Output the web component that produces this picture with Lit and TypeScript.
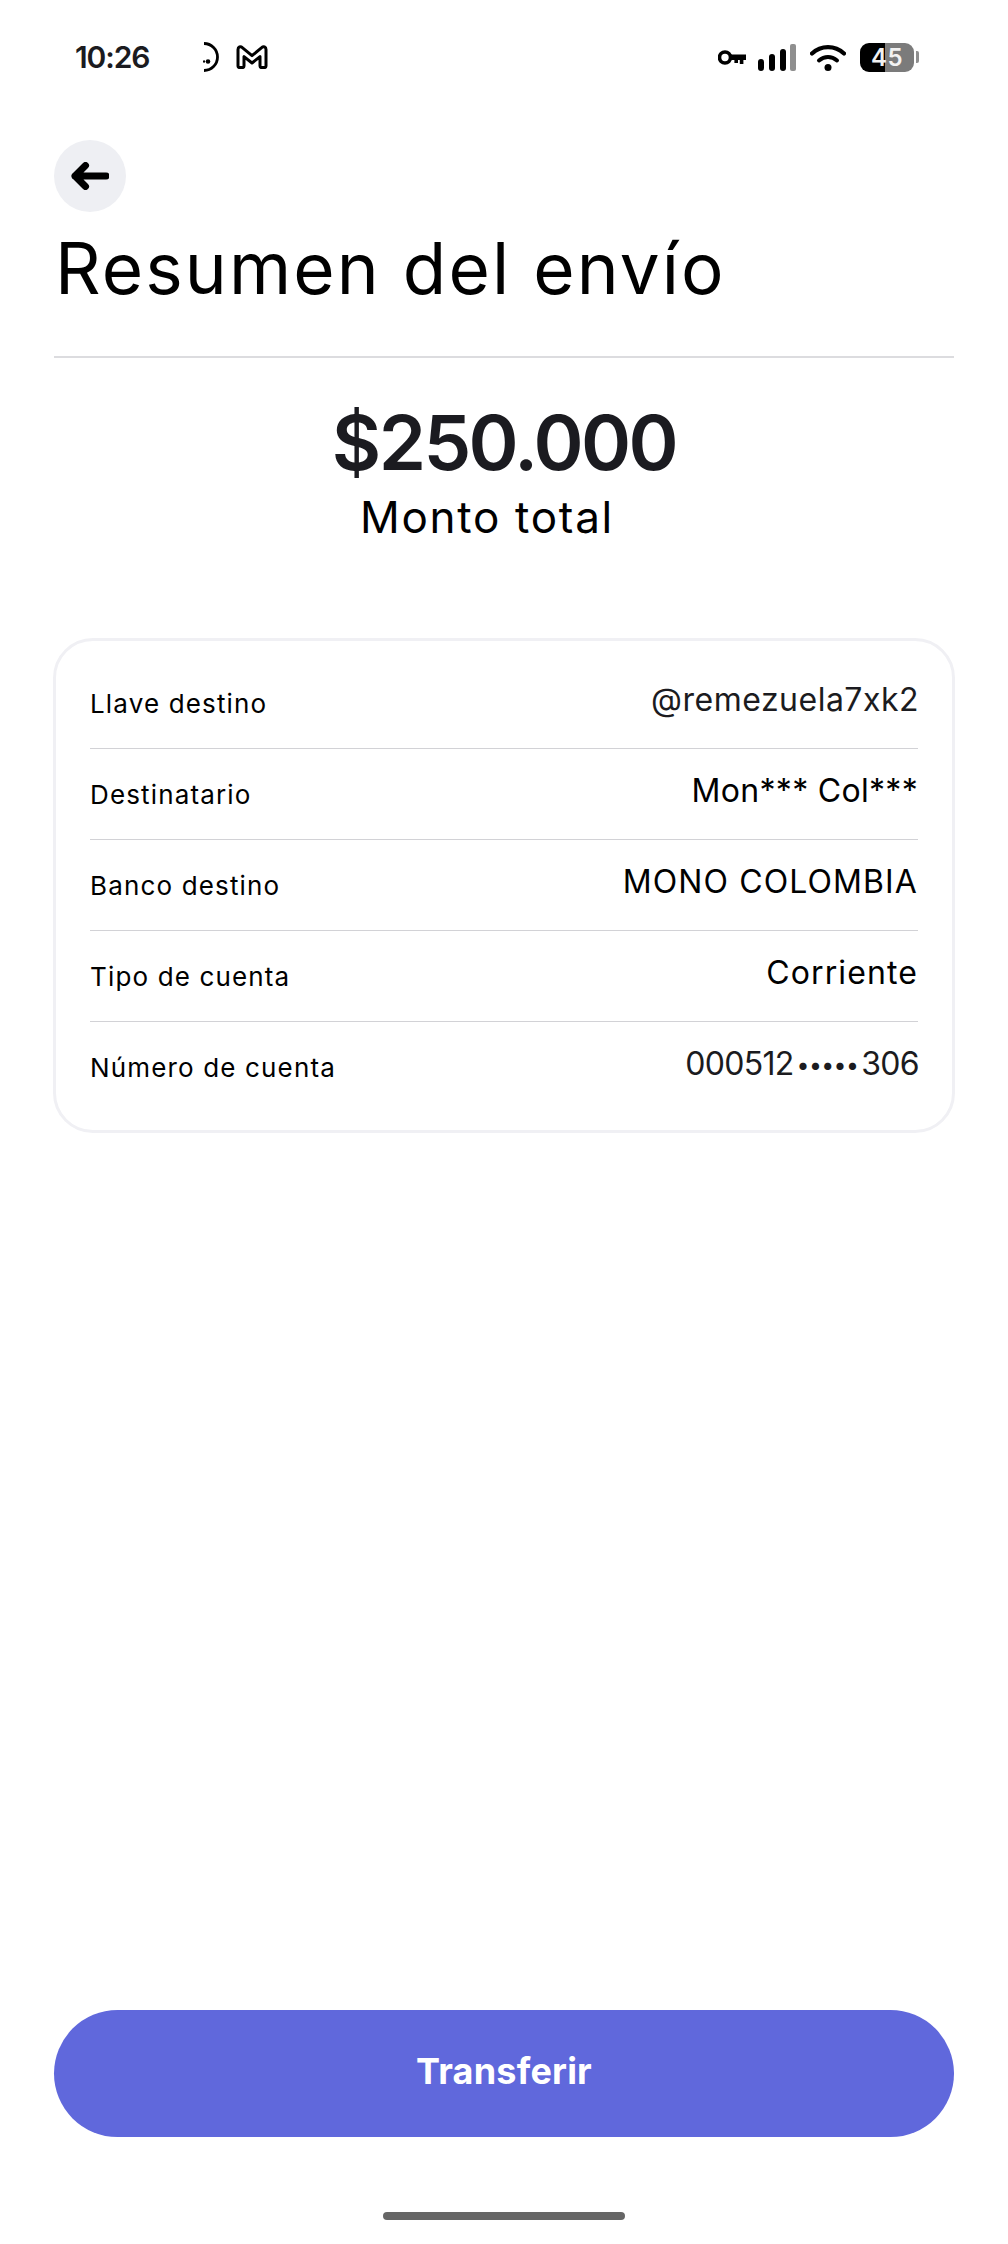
import { LitElement, html, css, svg } from 'lit';
import { customElement } from 'lit/decorators.js';

const rows = [
  { label: 'Llave destino', value: html`@remezuela7xk2`, cls: 'dark loose' },
  { label: 'Destinatario', value: html`Mon*** Col***`, cls: 'even' },
  { label: 'Banco destino', value: html`MONO COLOMBIA`, cls: 'wide' },
  { label: 'Tipo de cuenta', value: html`Corriente`, cls: 'wide' },
  {
    label: 'Número de cuenta',
    value: html`000512<span class="mask">•••••</span>306`,
    cls: 'dark tight',
  },
];

const moon = svg`<svg width="17" height="30" viewBox="0 0 17 30" fill="none">
  <path d="M1 1.500a13.500 13.500 0 0 1 0 27" stroke="#000" stroke-width="2.800"/>
  <circle cx="5" cy="19.500" r="2.300" fill="#000"/>
  <circle cx="1" cy="19.500" r="1.200" fill="#000"/>
</svg>`;

const gmail = svg`<svg class="gmail" width="32" height="24" viewBox="0 0 32 24" fill="none">
  <path d="M2 4.500C2 1.800 4.600 1 6 2.400L16 10.600 26 2.400C27.400 1 30 1.800 30 4.500V21a1.600 1.600 0 0 1-1.600 1.600H25.600A1.600 1.600 0 0 1 24 21V11.600L16 18 8 11.600V21a1.600 1.600 0 0 1-1.600 1.600H3.600A1.600 1.600 0 0 1 2 21Z" stroke="#000" stroke-width="3" stroke-linejoin="round"/>
</svg>`;

const key = svg`<svg class="key" width="28" height="15" viewBox="0 0 28 15" fill="none">
  <circle cx="7" cy="7.500" r="5.500" stroke="#000" stroke-width="3.600"/>
  <path d="M12 4.500h16v5.400h-2.600V14h-3.600V9.900h-1.800v3.100h-3.600V9.900H12Z" fill="#000"/>
</svg>`;

const signal = svg`<svg class="signal" width="38" height="27" viewBox="0 0 38 27">
  <rect x="0" y="15" width="6" height="12" rx="3" fill="#000"/>
  <rect x="11" y="10" width="6" height="17" rx="3" fill="#000"/>
  <rect x="22" y="5" width="6" height="22" rx="3" fill="#000"/>
  <rect x="32" y="0" width="6" height="27" rx="2" fill="#8f8f8f"/>
</svg>`;

const wifi = svg`<svg class="wifi" width="36" height="27" viewBox="0 0 36 27" fill="none">
  <path d="M2 9.500C11 1 25 1 34 9.500" stroke="#000" stroke-width="4.200" stroke-linecap="round"/>
  <path d="M9 16.500c5.400-4.600 12.600-4.600 18 0" stroke="#000" stroke-width="4" stroke-linecap="round"/>
  <circle cx="18" cy="23.500" r="3.500" fill="#000"/>
</svg>`;

const arrow = svg`<svg width="38" height="28" viewBox="0 0 38 28" fill="none">
  <path d="M14.500 3.500 4 14l10.500 10.500M4 14h31" stroke="#000" stroke-width="7" stroke-linecap="round" stroke-linejoin="round"/>
</svg>`;

@customElement('app-root')
export class AppRoot extends LitElement {
  static styles = css`
    :host {
      display: block;
      background: #fff;
      color: #000;
      font-family: Inter, 'Liberation Sans', sans-serif;
    }

    .page {
      display: flex;
      flex-direction: column;
      height: 2244px;
      box-sizing: border-box;
      padding: 0 54px;
    }

    .status {
      display: flex;
      align-items: center;
      height: 30px;
      margin-top: 42px;
      padding-left: 21px;
    }

    .time {
      width: 128px;
      font-size: 30px;
      font-weight: 600;
      letter-spacing: -1.1px;
      color: #1b1b20;
    }

    .gmail {
      margin-left: 16px;
    }

    .right {
      display: flex;
      align-items: center;
      margin-left: auto;
      margin-right: 35px;
    }

    .key {
      margin-right: 12px;
    }

    .wifi {
      margin-left: 14px;
    }

    .battery {
      display: flex;
      align-items: center;
      margin-left: 14px;
    }

    .cell {
      display: flex;
      align-items: center;
      justify-content: center;
      width: 54px;
      height: 29px;
      border-radius: 9px;
      background: linear-gradient(90deg, #000 0 25px, #7b7b7b 25px);
      color: #f2f2f2;
      font-size: 24px;
      font-weight: 600;
      letter-spacing: 0.5px;
    }

    .nub {
      width: 3px;
      height: 12px;
      margin-left: 2px;
      border-radius: 0 2px 2px 0;
      background: #8f8f8f;
    }

    .back {
      display: flex;
      align-items: center;
      justify-content: center;
      width: 72px;
      height: 72px;
      margin-top: 68px;
      border-radius: 50%;
      background: #eeeff3;
    }

    h1 {
      margin: 14px 0 0 1px;
      font-size: 71px;
      font-weight: 400;
      line-height: 84px;
      letter-spacing: 2.1px;
      color: #000;
    }

    .rule {
      height: 2px;
      margin-top: 46px;
      background: #dcdcdf;
    }

    .total {
      display: flex;
      flex-direction: column;
      align-items: center;
      margin-top: 38px;
    }

    .amount {
      font-size: 76px;
      font-weight: 600;
      line-height: 92px;
      letter-spacing: -2.6px;
      color: #1b1b20;
    }

    .caption {
      margin: 3px 34px 0 0;
      font-size: 44px;
      line-height: 52px;
      letter-spacing: 1.7px;
      color: #000;
    }

    .card {
      margin: 95px -1px 0;
      padding: 17px 34px;
      border: 3px solid #f0f0f4;
      border-radius: 40px;
    }

    .row {
      display: flex;
      justify-content: space-between;
      align-items: flex-start;
      box-sizing: border-box;
      height: 91px;
      padding-top: 22px;
      border-bottom: 1px solid #d2d2d6;
    }

    .row:last-child {
      border-bottom: none;
    }

    .label {
      margin-top: 4px;
      font-size: 26px;
      line-height: 40px;
      letter-spacing: 1.15px;
    }

    .value {
      font-size: 32px;
      line-height: 40px;
    }

    .dark {
      margin-right: -1px;
      color: #1b1b20;
    }

    .loose {
      letter-spacing: 0.5px;
    }

    .even {
      letter-spacing: 0.3px;
    }

    .wide {
      letter-spacing: 1.1px;
    }

    .tight {
      letter-spacing: -0.7px;
    }

    .mask {
      margin: 0 3px;
      font-size: 23px;
      letter-spacing: -0.6px;
      vertical-align: 2px;
    }

    .submit {
      display: block;
      width: 100%;
      height: 127px;
      margin-top: auto;
      padding: 0 0 5px;
      border: none;
      border-radius: 64px;
      background: #6068dc;
      color: #fff;
      font-family: inherit;
      font-size: 36px;
      font-weight: 700;
      letter-spacing: 0.2px;
    }

    .home {
      align-self: center;
      width: 242px;
      height: 8px;
      margin: 75px 0 24px;
      border-radius: 4px;
      background: #666;
    }
  `;

  render() {
    return html`
      <div class="page">
        <div class="status">
          <span class="time">10:26</span>
          ${moon} ${gmail}
          <div class="right">
            ${key} ${signal} ${wifi}
            <div class="battery">
              <div class="cell">45</div>
              <div class="nub"></div>
            </div>
          </div>
        </div>

        <div class="back">${arrow}</div>
        <h1>Resumen del envío</h1>
        <div class="rule"></div>

        <div class="total">
          <div class="amount">$250.000</div>
          <div class="caption">Monto total</div>
        </div>

        <div class="card">
          ${rows.map(
            (r) => html`
              <div class="row">
                <span class="label">${r.label}</span>
                <span class="value ${r.cls}">${r.value}</span>
              </div>
            `
          )}
        </div>

        <button class="submit">Transferir</button>
        <div class="home"></div>
      </div>
    `;
  }
}
